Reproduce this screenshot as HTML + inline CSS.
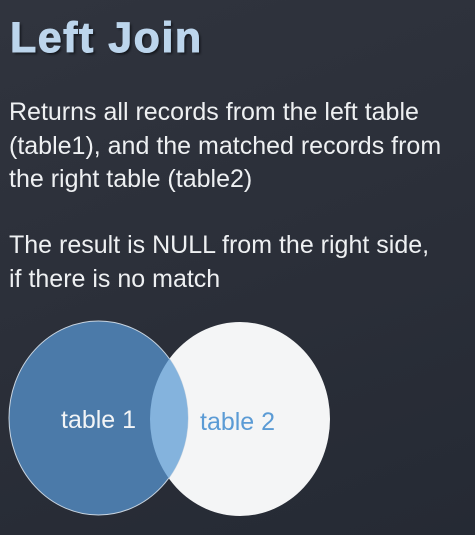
<!DOCTYPE html>
<html><head><style>
html,body{margin:0;padding:0}
body{width:475px;height:535px;overflow:hidden;background:linear-gradient(160deg,#30343e 0%,#2b2f39 50%,#252a34 100%);font-family:"Liberation Sans",sans-serif;position:relative}
.t{position:absolute;left:10px;top:14px;font-size:43px;font-weight:bold;color:#bcd5ec;text-shadow:2px 2px 2px #15181e;letter-spacing:1.5px;-webkit-text-stroke:1px #bcd5ec}
.p{position:absolute;left:9px;color:#eef0f2;font-size:25px;line-height:33.5px;white-space:nowrap}
</style></head><body>
<div class="t">Left Join</div>
<div class="p" style="top:96px">Returns all records from the left table<br>(table1), and the matched records from<br>the right table (table2)</div>
<div class="p" style="top:229px">The result is NULL from the right side,<br>if there is no match</div>
<svg width="475" height="535" style="position:absolute;left:0;top:0">
<defs><clipPath id="c1"><ellipse cx="98.5" cy="418" rx="89.5" ry="97"/></clipPath></defs>
<ellipse cx="240" cy="419" rx="90" ry="97" fill="#f4f5f6"/>
<ellipse cx="98.5" cy="418" rx="89.5" ry="97" fill="#4b7aa9" stroke="#c8d4e0" stroke-width="1"/>
<ellipse cx="240" cy="419" rx="90" ry="97" fill="#84b3dd" clip-path="url(#c1)"/>
<text x="61" y="428" font-family="Liberation Sans,sans-serif" font-size="25" fill="#f2f4f6">table 1</text>
<text x="200" y="430" font-family="Liberation Sans,sans-serif" font-size="25" fill="#5b9bd5">table 2</text>
</svg>
</body></html>
